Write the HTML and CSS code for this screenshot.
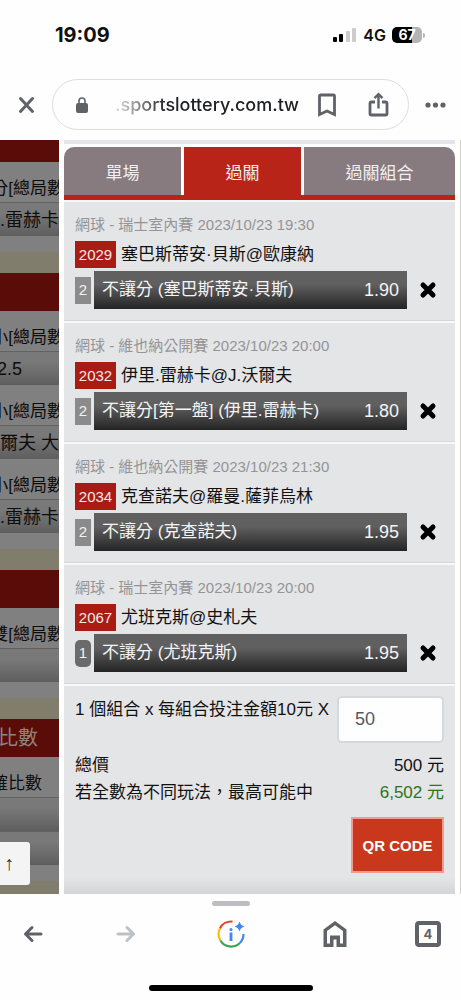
FILE: index.html
```html
<!DOCTYPE html>
<html lang="zh-TW">
  <head>
    <meta charset="UTF-8" />
    <meta name="viewport" content="width=device-width, initial-scale=1.0" />
    <title>sportslottery.com.tw</title>
    <link rel="stylesheet" href="styles.css">
  </head>
  <body>
    <header class="browser-top">
      <div class="status-bar">
        <span class="clock">19:09</span>
        <div class="status-icons">
          <svg class="signal" viewBox="0 0 24 14" width="24" height="14">
            <rect x="0" y="9" width="4" height="5" rx="1" fill="#000" />
            <rect x="6" y="6" width="4" height="8" rx="1" fill="#000" />
            <rect x="13" y="3" width="4" height="11" rx="1" fill="#ccc" />
            <rect x="19" y="0" width="4" height="14" rx="1" fill="#ccc" />
          </svg>
          <span class="network">4G</span>
          <span class="battery">67</span>
        </div>
      </div>
      <div class="address-row">
        <button class="icon-btn" aria-label="關閉">
          <svg viewBox="0 0 18 18" width="18" height="18">
            <path d="M2.500 2.500l12 13M14.500 2.500l-12 13" stroke="#5f6368" stroke-width="3" stroke-linecap="round" />
          </svg>
        </button>
        <div class="address-bar">
          <svg viewBox="0 0 14 18" width="14" height="18">
            <rect x="1" y="7" width="12" height="10" rx="2" fill="#5f6368" />
            <path d="M4 8V5a3 3 0 0 1 6 0v3" fill="none" stroke="#5f6368" stroke-width="1.600" />
          </svg>
          <input class="address" type="text" value=".sportslottery.com.tw" aria-label="網址" readonly />
          <button class="icon-btn" aria-label="加入書籤">
            <svg viewBox="0 0 20 24" width="20" height="24">
              <path d="M2.500 3a1 1 0 0 1 1-1h13a1 1 0 0 1 1 1v18.500L10 18l-7.500 3.500z" fill="none" stroke="#5f6368" stroke-width="2.800" />
            </svg>
          </button>
          <button class="icon-btn" aria-label="分享">
            <svg viewBox="0 0 22 26" width="22" height="26" fill="none" stroke="#5f6368" stroke-width="2.800">
              <path d="M7 10H3.500a1.500 1.500 0 0 0-1.500 1.500v10A1.500 1.500 0 0 0 3.500 23h14a1.500 1.500 0 0 0 1.500-1.500v-10a1.500 1.500 0 0 0-1.500-1.500H14" />
              <path d="M10.500 16.500V3M6.500 6.200l4-4 4 4" stroke-width="2.400" />
            </svg>
          </button>
        </div>
        <button class="icon-btn" aria-label="更多">
          <svg viewBox="0 0 21 6" width="21" height="6" fill="#5f6368">
            <circle cx="3" cy="3" r="2.600" />
            <circle cx="10.500" cy="3" r="2.600" />
            <circle cx="18" cy="3" r="2.600" />
          </svg>
        </button>
      </div>
    </header>

    <main class="page">
      <aside class="odds">
        <div class="odds-head odds-head-cut"></div>
        <div class="odds-name">分[總局數</div>
        <div class="odds-pick">.雷赫卡</div>
        <div class="odds-space"></div>
        <div class="odds-band"></div>
        <div class="odds-head"></div>
        <div class="odds-name">小[總局數</div>
        <div class="odds-pick"><span class="end-far">2.5</span></div>
        <div class="odds-name">小[總局數</div>
        <div class="odds-pick">爾夫 大</div>
        <div class="odds-name">小[總局數</div>
        <div class="odds-pick">.雷赫卡</div>
        <div class="odds-space"></div>
        <div class="odds-band"></div>
        <div class="odds-head"></div>
        <div class="odds-name">雙[總局數</div>
        <div class="odds-pick"></div>
        <div class="odds-space"></div>
        <div class="odds-band"></div>
        <div class="odds-head"><span class="end-title">比數</span></div>
        <div class="odds-name"><span class="end-middle">確比數</span></div>
        <div class="odds-pick"></div>
        <div class="odds-pick"></div>
        <div class="odds-space"></div>
        <div class="odds-band odds-band-last"></div>
        <button class="to-top" aria-label="回到頂端">↑</button>
      </aside>

      <section class="slip">
        <nav class="tabs">
          <button class="tab">單場</button>
          <button class="tab tab-active">過關</button>
          <button class="tab tab-wide">過關組合</button>
        </nav>

        <article class="bet">
          <p class="league">網球 - 瑞士室內賽 2023/10/23 19:30</p>
          <h4 class="match"><span class="code">2029</span>塞巴斯蒂安·貝斯@歐康納</h4>
          <div class="pick-row">
            <span class="min">2</span>
            <div class="pick"><span>不讓分 (塞巴斯蒂安·貝斯)</span><span class="price">1.90</span></div>
            <button class="remove" aria-label="刪除">
              <svg viewBox="0 0 18 18" width="18" height="18"><path d="M4 4l10 10M14 4L4 14" /></svg>
            </button>
          </div>
        </article>

        <article class="bet">
          <p class="league">網球 - 維也納公開賽 2023/10/23 20:00</p>
          <h4 class="match"><span class="code">2032</span>伊里.雷赫卡@J.沃爾夫</h4>
          <div class="pick-row">
            <span class="min">2</span>
            <div class="pick"><span>不讓分[第一盤] (伊里.雷赫卡)</span><span class="price">1.80</span></div>
            <button class="remove" aria-label="刪除">
              <svg viewBox="0 0 18 18" width="18" height="18"><path d="M4 4l10 10M14 4L4 14" /></svg>
            </button>
          </div>
        </article>

        <article class="bet">
          <p class="league">網球 - 維也納公開賽 2023/10/23 21:30</p>
          <h4 class="match"><span class="code">2034</span>克查諾夫@羅曼.薩菲烏林</h4>
          <div class="pick-row">
            <span class="min">2</span>
            <div class="pick"><span>不讓分 (克查諾夫)</span><span class="price">1.95</span></div>
            <button class="remove" aria-label="刪除">
              <svg viewBox="0 0 18 18" width="18" height="18"><path d="M4 4l10 10M14 4L4 14" /></svg>
            </button>
          </div>
        </article>

        <article class="bet">
          <p class="league">網球 - 瑞士室內賽 2023/10/23 20:00</p>
          <h4 class="match"><span class="code">2067</span>尤班克斯@史札夫</h4>
          <div class="pick-row">
            <span class="min min-single">1</span>
            <div class="pick"><span>不讓分 (尤班克斯)</span><span class="price">1.95</span></div>
            <button class="remove" aria-label="刪除">
              <svg viewBox="0 0 18 18" width="18" height="18"><path d="M4 4l10 10M14 4L4 14" /></svg>
            </button>
          </div>
        </article>

        <form class="summary">
          <div class="stake-row">
            <label for="stake">1 個組合 x 每組合投注金額10元 X</label>
            <input id="stake" class="stake" type="text" value="50" />
          </div>
          <div class="total-row"><span>總價</span><span>500 元</span></div>
          <div class="total-row"><span>若全數為不同玩法，最高可能中</span><span class="win">6,502 元</span></div>
          <button class="qr" type="button">QR CODE</button>
        </form>
      </section>
    </main>

    <footer class="browser-bottom">
      <div class="handle"></div>
      <nav class="toolbar">
        <button class="icon-btn" aria-label="上一頁">
          <svg viewBox="0 0 20 18" width="20" height="18" fill="none" stroke="#5f6368" stroke-width="3" stroke-linecap="round" stroke-linejoin="round">
            <path d="M18 9H2.500M9 2.500L2.500 9 9 15.500" />
          </svg>
        </button>
        <button class="icon-btn" aria-label="下一頁">
          <svg viewBox="0 0 20 18" width="20" height="18" fill="none" stroke="#bdc1c6" stroke-width="3" stroke-linecap="round" stroke-linejoin="round">
            <path d="M2 9h15.500M11 2.500L17.500 9 11 15.500" />
          </svg>
        </button>
        <button class="icon-btn page-info" aria-label="網頁資訊">
          <svg viewBox="0 0 28 28" width="28" height="28" fill="none" stroke-width="2.200">
            <path d="M2.900 8.500A12.500 12.500 0 0 1 15.500 1.600" stroke="#ea4335" />
            <path d="M3.400 20.500A12.500 12.500 0 0 1 2.900 8.500" stroke="#fbbc04" />
            <path d="M22.800 23A12.500 12.500 0 0 1 3.400 20.500" stroke="#34a853" />
            <path d="M26.500 14A12.500 12.500 0 0 1 22.800 23" stroke="#4285f4" />
            <path d="M22.500 1.500q1 4 5 5q-4 1-5 5q-1-4-5-5q4-1 5-5z" fill="#4285f4" />
            <path d="M14 12.500v8.500" stroke="#4285f4" stroke-width="2.800" />
            <circle cx="14" cy="9.500" r="1.500" fill="#4285f4" />
          </svg>
        </button>
        <button class="icon-btn" aria-label="首頁">
          <svg viewBox="0 0 24 26" width="24" height="26">
            <path fill="#5f6368" fill-rule="evenodd" d="M12 0L.5 8.500V26H10.500V18.500h3V26H23.500V8.500zM12 4.200L20 10v12.500h-3V14.500H7v8H4V10z" />
          </svg>
        </button>
        <button class="tab-count" aria-label="分頁">4</button>
      </nav>
      <div class="home-indicator"></div>
    </footer>
  </body>
</html>
```
FILE: styles.css
```css
* {
  margin: 0;
  padding: 0;
  box-sizing: border-box;
}
body {
  display: flex;
  flex-direction: column;
  min-height: 100vh;
  background: #fefefe;
  color: #111;
  font-family: "Liberation Sans", "Noto Sans CJK TC", sans-serif;
  font-size: 17px;
  line-height: 24px;
}
button {
  border: none;
  background: none;
  font-family: inherit;
  cursor: pointer;
}
svg {
  display: block;
}

/* browser chrome */
.status-bar {
  display: flex;
  justify-content: space-between;
  align-items: center;
  height: 69px;
  padding: 0 39px 0 55px;
  font-family: Inter, sans-serif;
}
.clock {
  font-size: 20px;
  font-weight: 700;
}
.status-icons {
  display: flex;
  align-items: center;
  gap: 6px;
}
.network {
  font-size: 16px;
  font-weight: 600;
}
.battery {
  position: relative;
  width: 30px;
  height: 16px;
  border-radius: 5px;
  background: linear-gradient(to right, #000 67%, #b4b4b4 67%);
  color: #fff;
  font-size: 14px;
  font-weight: 700;
  line-height: 16px;
  text-align: center;
}
.battery::after {
  content: "";
  position: absolute;
  top: 6px;
  right: -3px;
  width: 2px;
  height: 5px;
  border-radius: 0 2px 2px 0;
  background: #b4b4b4;
}
.address-row {
  display: flex;
  align-items: center;
  gap: 16px;
  padding: 10px 15px 9px 18px;
}
.address-bar {
  display: flex;
  flex: 1;
  align-items: center;
  gap: 18px;
  min-width: 0;
  height: 51px;
  padding: 0 18px 0 22px;
  border: 1px solid #dcdce2;
  border-radius: 26px;
}
.address {
  flex: 1;
  min-width: 0;
  border: none;
  outline: none;
  background: none;
  color: #202124;
  font-family: Inter, sans-serif;
  font-size: 18px;
  font-weight: 500;
  text-align: right;
  -webkit-mask-image: linear-gradient(to right, transparent, #000 60px);
  mask-image: linear-gradient(to right, transparent, #000 60px);
}
.address + .icon-btn {
  margin-right: 13px;
}

/* page */
.page {
  display: grid;
  flex: 1;
  grid-template-columns: 59px 1fr;
  gap: 5px;
  padding-right: 5px;
  border-right: 1px solid #d5d3c8;
  margin-top: 1px;
}
.odds {
  position: relative;
  display: flex;
  flex-direction: column;
  overflow: hidden;
  background: #808080;
  color: #0c0c0c;
  white-space: nowrap;
}
.odds-head,
.odds-name,
.odds-pick {
  display: flex;
  justify-content: flex-end;
  align-items: center;
}
.odds-head {
  height: 38px;
  background: #5a0c08;
  color: #918480;
  font-size: 20px;
}
.odds-head-cut {
  height: 22px;
}
.odds-name {
  height: 40px;
  margin-right: -5px;
  padding-top: 14px;
}
.odds-pick {
  height: 34px;
  border-top: 1px solid #626262;
  background: linear-gradient(#797979 30%, #5e5e5e);
  font-size: 18px;
}
.odds-space {
  height: 16px;
}
.odds-band {
  height: 21px;
  background: #807d6c;
}
.odds-band-last {
  flex: 1;
}
.end-middle {
  margin-right: 22px;
}
.end-title {
  margin-right: 21px;
}
.end-far {
  margin-right: 37px;
}
.to-top {
  position: absolute;
  left: -8px;
  bottom: 9px;
  width: 38px;
  height: 43px;
  padding-right: 4px;
  border-radius: 3px;
  background: #f4f4f4;
  color: #333;
  font-size: 20px;
  text-align: center;
}

/* bet slip */
.slip {
  min-width: 0;
  border-top: 4px solid #e4e5e7;
  background: linear-gradient(to top, #d3d4d6, #e4e5e7 16px);
}
.tabs {
  display: flex;
  gap: 3px;
  padding-top: 3px;
  border-bottom: 5px solid #b82418;
  background: #fefefe;
}
.tab {
  flex: 117;
  height: 48px;
  background: #877b80;
  color: #f2eff0;
  font-size: 17px;
}
.tab-wide {
  flex: 151;
  border-radius: 0 10px 0 0;
}
.tab:first-child {
  border-radius: 10px 0 0 0;
}
.tab-active {
  background: #b82418;
}
.bet {
  padding: 13px 18px 11px 11px;
  border-top: 2px solid #f8f8f9;
  border-bottom: 1px solid #d6d7d9;
}
.league {
  color: #949496;
  font-size: 15px;
  line-height: 20px;
}
.match {
  display: flex;
  align-items: center;
  gap: 5px;
  margin-top: 6px;
  font-size: 17px;
  font-weight: 400;
}
.code {
  width: 41px;
  height: 27px;
  background: #a81c14;
  color: #f6e8e7;
  font-size: 15px;
  line-height: 27px;
  text-align: center;
}
.pick-row {
  display: flex;
  align-items: center;
  gap: 3px;
  margin-top: 3px;
}
.min {
  width: 16px;
  height: 27px;
  background: #8b8b8b;
  color: #f2f2f2;
  font-size: 15px;
  line-height: 26px;
  text-align: center;
}
.min-single {
  border-radius: 5px;
  background: #6b6b6b;
}
.pick {
  display: flex;
  flex: 1;
  justify-content: space-between;
  align-items: center;
  height: 38px;
  padding: 0 8px;
  background: linear-gradient(#606060 35%, #242424);
  color: #f4f4f4;
}
.price {
  font-size: 18px;
}
.remove {
  margin-left: 9px;
}
.remove path {
  stroke: #000;
  stroke-width: 5;
  stroke-linecap: round;
}
.summary {
  padding: 10px 11px 21px;
  border-top: 2px solid #f8f8f9;
}
.stake-row {
  display: flex;
  justify-content: space-between;
  margin-bottom: 9px;
  line-height: 27px;
  white-space: nowrap;
}
.stake {
  width: 107px;
  height: 47px;
  padding: 0 16px;
  border: 2px solid #d5d9de;
  border-radius: 5px;
  background: #fefefe;
  color: #555a60;
  font-family: inherit;
  font-size: 18px;
}
.total-row {
  display: flex;
  justify-content: space-between;
  line-height: 27px;
}
.win {
  color: #2c7319;
}
.qr {
  display: block;
  width: 93px;
  height: 56px;
  margin: 11px 0 0 auto;
  border: 2px solid #f09a90;
  background: #c9381c;
  color: #fff;
  font-size: 15px;
  font-weight: 700;
}

/* bottom bar */
.browser-bottom {
  display: flex;
  flex-direction: column;
  align-items: center;
  padding: 7px 0 9px;
}
.handle {
  width: 38px;
  height: 5px;
  border-radius: 3px;
  background: #bcbec3;
}
.toolbar {
  display: flex;
  justify-content: space-between;
  align-items: center;
  width: 100%;
  height: 56px;
  padding: 0 20px;
}
.toolbar .icon-btn {
  display: flex;
  justify-content: center;
  width: 26px;
}
.toolbar .page-info {
  width: 50px;
}
.tab-count {
  width: 26px;
  height: 26px;
  border: 4px solid #5f6368;
  border-radius: 4px;
  color: #5f6368;
  font-family: Inter, sans-serif;
  font-size: 13px;
  font-weight: 700;
  line-height: 18px;
}
.home-indicator {
  width: 164px;
  height: 6px;
  margin-top: 23px;
  border-radius: 3px;
  background: #000;
}
```
